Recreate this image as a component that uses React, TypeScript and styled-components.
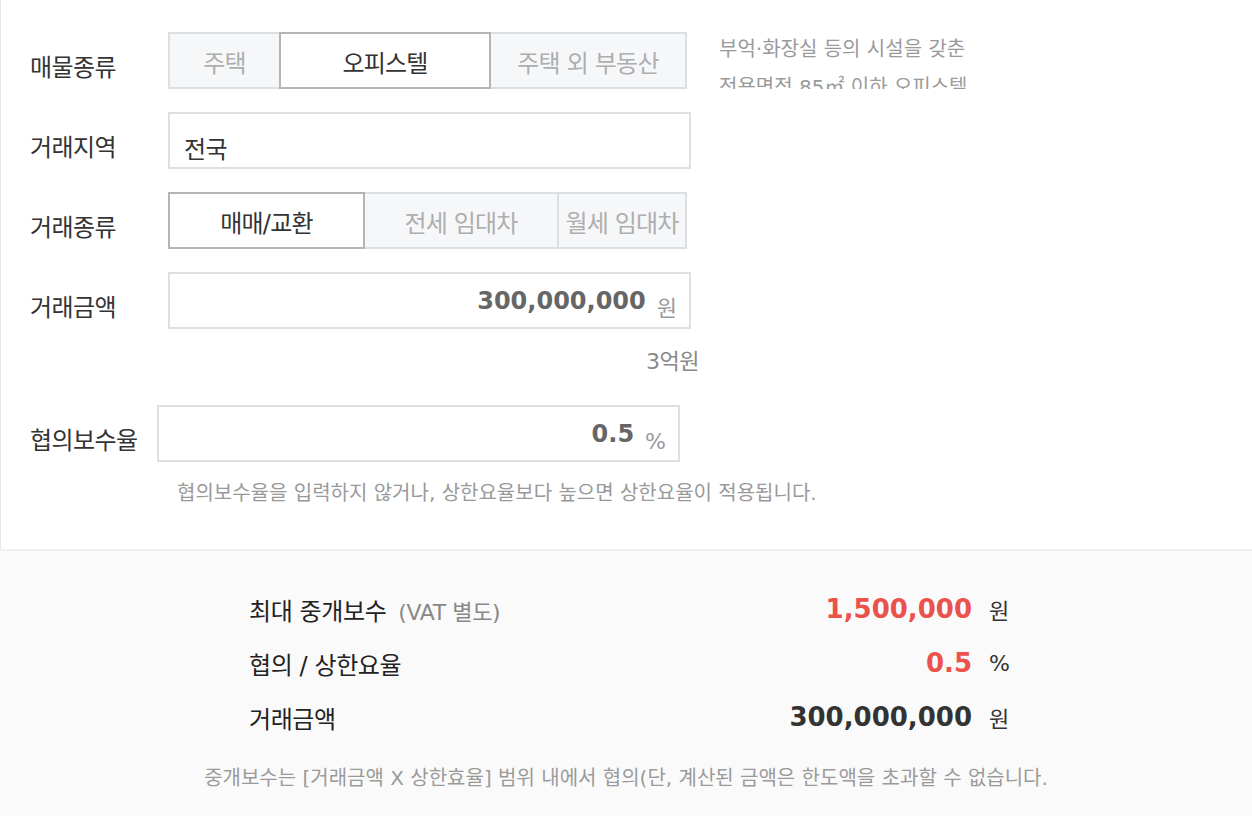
import React from 'react'
import styled, { createGlobalStyle } from 'styled-components'

const GlobalStyle = createGlobalStyle`
    html, body {
        margin: 0;
        padding: 0;
        background: #fafafa;
    }
    body {
        font-family: "DejaVu Sans", "Noto Sans CJK KR", sans-serif;
        color: #333;
    }
`;

interface ISegment {
    label: string;
    width: number;
    active?: boolean;
}

const propertyTypes: ISegment[] = [
    { label: '주택', width: 113 },
    { label: '오피스텔', width: 212, active: true },
    { label: '주택 외 부동산', width: 198 },
];

const dealTypes: ISegment[] = [
    { label: '매매/교환', width: 197, active: true },
    { label: '전세 임대차', width: 196 },
    { label: '월세 임대차', width: 130 },
];

const Page = styled.div`
    width: 1252px;
    min-height: 816px;
    display: flex;
    flex-direction: column;
`;

const FormSection = styled.section`
    background: #fff;
    border-left: 1px solid #e6e6e6;
    padding: 32px 0 43px 29px;
    display: flex;
    flex-direction: column;
`;

const Row = styled.div<{ gap?: number }>`
    display: flex;
    align-items: center;
    margin-top: ${p => p.gap || 0}px;
`;

const Label = styled.div<{ width?: number }>`
    width: ${p => p.width || 138}px;
    flex-shrink: 0;
    padding-top: 14px;
    font-size: 24px;
    line-height: 30px;
    color: #333;
    letter-spacing: -0.6px;
`;

const Segments = styled.div`
    display: flex;
    width: 523px;
    height: 57px;
`;

const Segment = styled.button<{ w: number; active?: boolean }>`
    position: relative;
    z-index: ${p => (p.active ? 1 : 0)};
    width: ${p => p.w}px;
    height: 57px;
    box-sizing: border-box;
    margin: 0 0 0 -2px;
    &:first-child {
        margin-left: 0;
    }
    padding: 2px 0 0;
    border: 2px solid ${p => (p.active ? '#b5b5b5' : '#dedfe2')};
    background: ${p => (p.active ? '#fff' : '#f6f7f9')};
    color: ${p => (p.active ? '#333' : '#aeaeae')};
    font-family: inherit;
    font-size: 24px;
    letter-spacing: -0.8px;
    white-space: nowrap;
    cursor: pointer;
`;

const Description = styled.div`
    margin: -2px 0 0 28px;
    width: 300px;
    height: 59px;
    overflow: hidden;
    align-self: flex-start;
    font-size: 20px;
    line-height: 38px;
    color: #9a9a9a;
    white-space: nowrap;
`;

const Field = styled.div<{ align?: 'left' | 'right' }>`
    width: 523px;
    height: 57px;
    box-sizing: border-box;
    border: 2px solid #dedfe2;
    background: #fff;
    display: flex;
    align-items: center;
    justify-content: ${p => (p.align === 'right' ? 'flex-end' : 'flex-start')};
    padding: 0 12px 0 14px;
`;

const RegionText = styled.span`
    padding-top: 18px;
    font-size: 24px;
    line-height: 30px;
    color: #333;
    letter-spacing: -0.6px;
`;

const FieldValue = styled.span`
    font-size: 24px;
    font-weight: bold;
    color: #666;
    line-height: 30px;
`;

const FieldUnit = styled.span`
    margin-left: 11px;
    padding-top: 16px;
    font-size: 22px;
    line-height: 26px;
    color: #9a9a9a;
`;

const AmountHint = styled.div`
    width: 669px;
    margin-top: 20px;
    text-align: right;
    font-size: 22px;
    line-height: 26px;
    color: #888;
    letter-spacing: -0.5px;
`;

const HelpText = styled.div`
    margin: 18px 0 0 147px;
    font-size: 20px;
    line-height: 26px;
    color: #999;
`;

const ResultSection = styled.section`
    flex: 1;
    background: #fafafa;
    border-top: 2px solid #f0f0f0;
    padding: 31px 0 30px;
`;

const ResultTable = styled.div`
    width: 760px;
    margin: 0 auto;
    padding-left: 6px;
    display: flex;
    flex-direction: column;
`;

const ResultRow = styled.div`
    height: 54px;
    display: flex;
    align-items: center;
`;

const ResultLabel = styled.div`
    flex: 1;
    font-size: 24px;
    color: #222;
    letter-spacing: -0.4px;
`;

const Sub = styled.span`
    margin-left: 12px;
    font-size: 22px;
    color: #888;
    letter-spacing: -0.4px;
`;

const ResultValue = styled.span<{ red?: boolean }>`
    font-size: 26px;
    font-weight: bold;
    color: ${p => (p.red ? '#ea524b' : '#333')};
`;

const ResultUnit = styled.span`
    width: 20px;
    margin-left: 17px;
    font-size: 22px;
    color: #333;
`;

const Note = styled.div`
    margin-top: 21px;
    text-align: center;
    font-size: 20px;
    line-height: 26px;
    color: #9a9a9a;
`;

export default function App() {
    return (
        <Page>
            <GlobalStyle />
            <FormSection>
                <Row>
                    <Label>매물종류</Label>
                    <Segments>
                        {propertyTypes.map((s) => (
                            <Segment key={s.label} w={s.width} active={s.active}>{s.label}</Segment>
                        ))}
                    </Segments>
                    <Description>
                        부억·화장실 등의 시설을 갖춘<br />
                        전용면적 85㎡ 이하 오피스텔
                    </Description>
                </Row>

                <Row gap={23}>
                    <Label>거래지역</Label>
                    <Field>
                        <RegionText>전국</RegionText>
                    </Field>
                </Row>

                <Row gap={23}>
                    <Label>거래종류</Label>
                    <Segments>
                        {dealTypes.map((s) => (
                            <Segment key={s.label} w={s.width} active={s.active}>{s.label}</Segment>
                        ))}
                    </Segments>
                </Row>

                <Row gap={23}>
                    <Label>거래금액</Label>
                    <Field align="right">
                        <FieldValue>300,000,000</FieldValue>
                        <FieldUnit>원</FieldUnit>
                    </Field>
                </Row>
                <AmountHint>3억원</AmountHint>

                <Row gap={30}>
                    <Label width={127}>협의보수율</Label>
                    <Field align="right">
                        <FieldValue>0.5</FieldValue>
                        <FieldUnit>%</FieldUnit>
                    </Field>
                </Row>
                <HelpText>협의보수율을 입력하지 않거나, 상한요율보다 높으면 상한요율이 적용됩니다.</HelpText>
            </FormSection>

            <ResultSection>
                <ResultTable>
                    <ResultRow>
                        <ResultLabel>최대 중개보수<Sub>(VAT 별도)</Sub></ResultLabel>
                        <ResultValue red>1,500,000</ResultValue>
                        <ResultUnit>원</ResultUnit>
                    </ResultRow>
                    <ResultRow>
                        <ResultLabel>협의 / 상한요율</ResultLabel>
                        <ResultValue red>0.5</ResultValue>
                        <ResultUnit>%</ResultUnit>
                    </ResultRow>
                    <ResultRow>
                        <ResultLabel>거래금액</ResultLabel>
                        <ResultValue>300,000,000</ResultValue>
                        <ResultUnit>원</ResultUnit>
                    </ResultRow>
                </ResultTable>
                <Note>중개보수는 [거래금액 X 상한효율] 범위 내에서 협의(단, 계산된 금액은 한도액을 초과할 수 없습니다.</Note>
            </ResultSection>
        </Page>
    )
}
